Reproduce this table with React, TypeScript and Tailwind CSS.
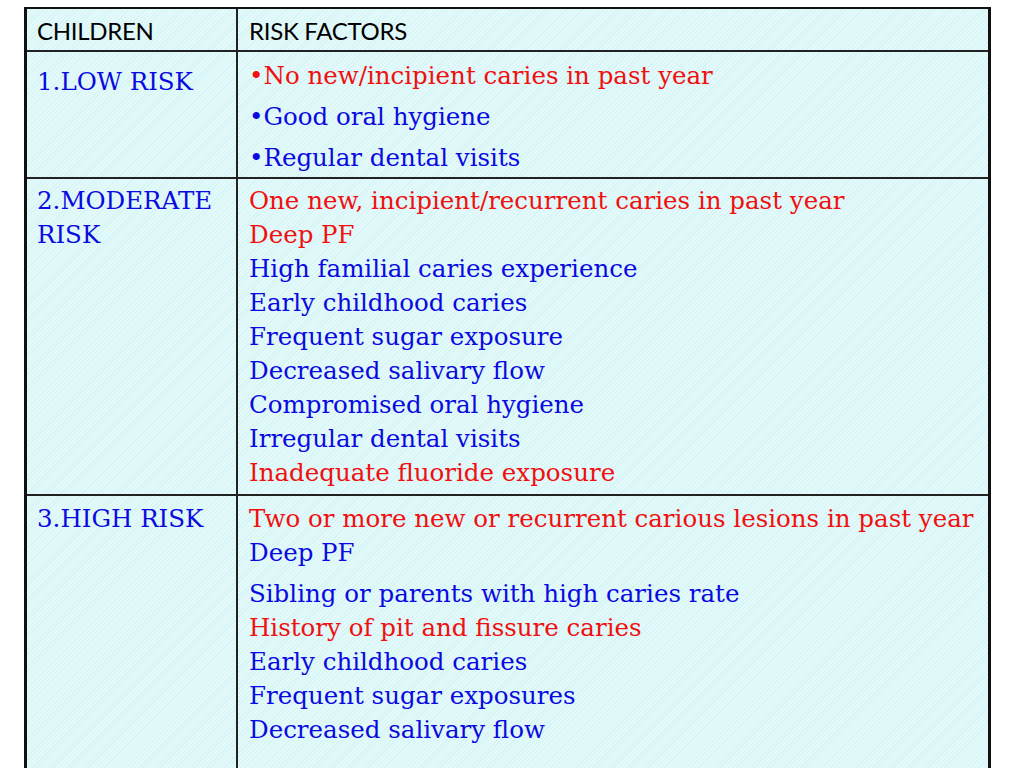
import React from 'react';

type Line = { text: string; red?: boolean; gap?: boolean };

const hatch =
  'bg-[repeating-linear-gradient(135deg,#d4f4f6_0px,#d4f4f6_1px,#e4f9fa_1px,#e4f9fa_3px)]';

const moderate: Line[] = [
  { text: 'One new, incipient/recurrent caries in past year', red: true },
  { text: 'Deep PF', red: true },
  { text: 'High familial caries experience' },
  { text: 'Early childhood caries' },
  { text: 'Frequent sugar exposure' },
  { text: 'Decreased salivary flow' },
  { text: 'Compromised oral hygiene' },
  { text: 'Irregular dental visits' },
  { text: 'Inadequate fluoride exposure', red: true },
];

const high: Line[] = [
  { text: 'Two or more new or recurrent carious lesions in past year', red: true },
  { text: 'Deep PF' },
  { text: 'Sibling or parents with high caries rate', gap: true },
  { text: 'History of pit and fissure caries', red: true },
  { text: 'Early childhood caries' },
  { text: 'Frequent sugar exposures' },
  { text: 'Decreased salivary flow' },
];

const serif = "font-['DejaVu_Serif',serif] text-[24.5px]";

function Lines({ lines, lh }: { lines: Line[]; lh: string }) {
  return (
    <div className={serif}>
      {lines.map((l, i) => (
        <div
          key={i}
          className={`${lh} whitespace-nowrap ${l.red ? 'text-[#f01010]' : 'text-[#0a0ae0]'} ${
            l.gap ? 'mt-[7px]' : ''
          }`}
        >
          {l.text}
        </div>
      ))}
    </div>
  );
}

export default function App() {
  return (
    <div className="w-[1024px] h-[768px] overflow-hidden bg-white pt-[7px] pl-[24px]">
      <div
        className={`w-[967px] h-[800px] border-l-[3px] border-r-[3px] border-t-2 border-[#111] ${hatch} grid grid-cols-[211px_1fr] grid-rows-[43px_127px_317px_1fr]`}
      >
        {/* header */}
        <div className="border-b-2 border-r-2 border-[#222] pl-[10px] pt-[7px] font-['Lato',sans-serif] text-[24px] tracking-[-0.3px] text-black leading-[30px]">
          CHILDREN
        </div>
        <div className="border-b-2 border-[#222] pl-[11px] pt-[7px] font-['Lato',sans-serif] text-[24px] tracking-[-0.3px] text-black leading-[30px]">
          RISK FACTORS
        </div>

        {/* low risk */}
        <div className={`border-b-2 border-r-2 border-[#222] pl-[10px] pt-[10px] ${serif} text-[#0a0ae0] leading-[40px]`}>
          1.LOW RISK
        </div>
        <div className="border-b-2 border-[#222] pl-[11px] pt-[3px]">
          <Lines
            lh="leading-[41px]"
            lines={[
              { text: '•No new/incipient caries in past year', red: true },
              { text: '•Good oral hygiene' },
              { text: '•Regular dental visits' },
            ]}
          />
        </div>

        {/* moderate */}
        <div className={`border-b-2 border-r-2 border-[#222] pl-[10px] pt-[5px] ${serif} text-[#0a0ae0] leading-[34px]`}>
          <div>2.MODERATE</div>
          <div>RISK</div>
        </div>
        <div className="border-b-2 border-[#222] pl-[11px] pt-[5px]">
          <Lines lh="leading-[34px]" lines={moderate} />
        </div>

        {/* high */}
        <div className={`border-r-2 border-[#222] pl-[10px] pt-[6px] ${serif} text-[#0a0ae0] leading-[34px]`}>
          3.HIGH RISK
        </div>
        <div className="pl-[11px] pt-[6px]">
          <Lines lh="leading-[34px]" lines={high} />
        </div>
      </div>
    </div>
  );
}
